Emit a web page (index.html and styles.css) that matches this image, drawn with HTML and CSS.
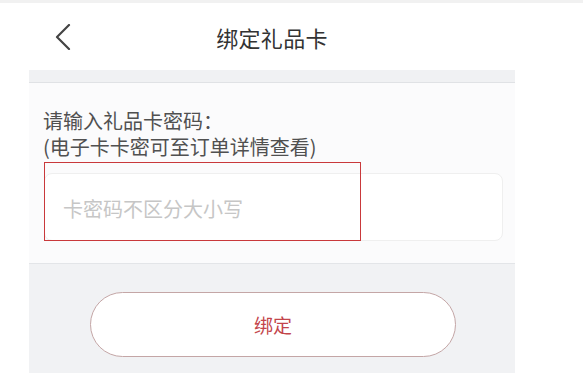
FILE: index.html
```html
<!DOCTYPE html>
<html lang="zh-CN">
<head>
<meta charset="utf-8">
<title>绑定礼品卡</title>
<link rel="stylesheet" href="styles.css">
</head>
<body>
<div class="topstrip"></div>
<div class="page">
  <header class="header">
    <svg class="back" width="16" height="26" viewBox="0 0 16 26">
      <polyline points="14,1 2,13 14,25" fill="none" stroke="#444" stroke-width="2.2" stroke-linecap="round" stroke-linejoin="round"/>
    </svg>
    <div class="title">绑定礼品卡</div>
  </header>
  <div class="band"></div>
  <section class="content">
    <div class="label">
      <div class="label-line">请输入礼品卡密码：</div>
      <div class="label-line">(电子卡卡密可至订单详情查看)</div>
    </div>
    <div class="field">
      <div class="input"><span class="placeholder">卡密码不区分大小写</span></div>
      <div class="highlight"></div>
    </div>
  </section>
  <section class="footer">
    <button class="bind">绑定</button>
  </section>
</div>
</body>
</html>
```

FILE: styles.css
```css
* { box-sizing: border-box; }
html, body { margin: 0; padding: 0; background: #ffffff; }
body {
  font-family: "Noto Sans CJK SC", "Noto Sans", sans-serif;
  width: 583px;
  height: 373px;
  overflow: hidden;
}
.topstrip { height: 3px; background: #f1f1f1; }
.page { margin-left: 29px; width: 486px; }
.header {
  position: relative;
  height: 67px;
  display: flex;
  align-items: center;
  justify-content: center;
  background: #fff;
}
.back { position: absolute; left: 26px; top: 21px; }
.title { font-size: 22px; color: #333; letter-spacing: 0.3px; }
.band {
  height: 13px;
  background: #f0f1f3;
  border-bottom: 1px solid #e0e2e5;
}
.content {
  background: #fbfbfc;
  padding: 25px 12px 22px 14px;
  border-bottom: 1px solid #e3e5e8;
}
.label { color: #505050; }
.label-line {
  font-size: 20px;
  line-height: 26px;
  height: 26px;
}
.field { position: relative; margin-top: 13px; margin-left: 1px; }
.input {
  height: 68px;
  background: #fff;
  border: 1px solid #efefef;
  border-radius: 8px;
  display: flex;
  align-items: center;
  padding-left: 18px;
}
.placeholder { font-size: 20px; color: #c6c6c6; margin-top: 3px; }
.highlight {
  position: absolute;
  left: 0;
  top: -11px;
  width: 317px;
  height: 79px;
  border: 1.5px solid #c9393b;
}
.footer {
  background: #f1f2f4;
  height: 110px;
  padding-top: 28px;
}
.bind {
  display: block;
  margin-left: 61px;
  width: 366px;
  height: 65px;
  border-radius: 33px;
  border: 1px solid #c4a6a6;
  background: #fff;
  color: #c3454b;
  font-family: "Noto Sans CJK SC", sans-serif;
  font-size: 19px;
  padding: 0;
}
```
